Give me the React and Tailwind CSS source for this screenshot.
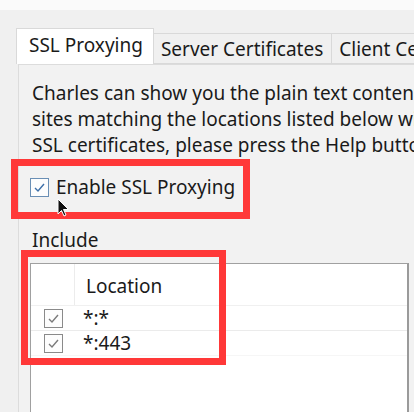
import React from 'react';

const font = { fontFamily: '"Noto Sans", "Open Sans", sans-serif' };

function Check({ blue }) {
  const border = blue ? 'border-[#6a8fb5]' : 'border-[#8a8a8a]';
  const stroke = blue ? '#3d6fa8' : '#7a7a7a';
  return (
    <span className={`flex items-center justify-center w-[19px] h-[19px] border ${border} bg-[#fdfdfd] shrink-0`}>
      <svg width="13" height="13" viewBox="0 0 13 13" fill="none">
        <path d="M2 7 L5 10 L11 3" stroke={stroke} strokeWidth="1.4" />
      </svg>
    </span>
  );
}

function Tab({ label, active }) {
  if (active) {
    return (
      <div className="h-[38px] pl-[12px] pr-[10px] pb-[4px] bg-white border border-b-0 border-[#d9d9d9] flex items-center text-[19px] text-[#1a1a1a] whitespace-nowrap shrink-0 relative z-10 -mb-[2px]">
        {label}
      </div>
    );
  }
  return (
    <div className="h-[31px] pl-[7px] pr-[8px] pt-[2px] bg-[#f0f0f0] border border-l-0 border-[#d9d9d9] flex items-center text-[19px] text-[#1a1a1a] whitespace-nowrap shrink-0">
      {label}
    </div>
  );
}

export default function App() {
  return (
    <div className="w-[414px] h-[412px] bg-[#f0f0f0] relative overflow-hidden" style={font}>
      <div className="h-[10px] bg-[#fafafa]" />
      <div className="flex items-end pl-[16px] pt-[18px] overflow-hidden">
        <Tab label="SSL Proxying" active />
        <Tab label="Server Certificates" />
        <Tab label="Client Certificates" />
      </div>
      <div className="ml-[18px] border-l border-t border-[#dcdcdc] bg-[#f2f2f2] h-[360px] pl-[13px] pt-[15px]">
        <div className="text-[19px] leading-[26px] text-[#1a1a1a] whitespace-nowrap">
          <div>Charles can show you the plain text contents of SSL requests and responses for</div>
          <div>sites matching the locations listed below without decrypting other traffic</div>
          <div>SSL certificates, please press the Help button.</div>
        </div>
        <div className="flex items-center gap-[7px] mt-[19px] -ml-[2px] h-[20px] text-[19px] text-[#1a1a1a]">
          <Check blue />
          <span>Enable SSL Proxying</span>
        </div>
        <div className="mt-[30px] text-[19px] leading-[26px] text-[#1a1a1a]">Include</div>
        <div className="mt-[10px] -ml-[2px] mr-[5px] h-[160px] border border-[#a0a0a0] border-r-2 border-r-[#9a9a9a] bg-white">
          <div className="flex h-[42px] border-b border-[#f0f0f0]">
            <div className="w-[44px] border-r border-[#ececec]" />
            <div className="flex items-center pl-[11px] pt-[4px] text-[19px] text-[#1a1a1a]">Location</div>
          </div>
          <div className="flex h-[25px] border-b border-[#ebebeb] items-center">
            <div className="w-[44px] flex justify-center"><Check /></div>
            <div className="pl-[8px] text-[19px] text-[#1a1a1a]">*:*</div>
          </div>
          <div className="flex h-[25px] border-b border-[#f6f6f6] items-center">
            <div className="w-[44px] flex justify-center"><Check /></div>
            <div className="pl-[8px] text-[19px] text-[#1a1a1a]">*:443</div>
          </div>
        </div>
      </div>

      <div className="absolute left-[11px] top-[159px] w-[239px] h-[60px] border-[7px] border-[#ff3838]" />
      <div className="absolute left-[21px] top-[250px] w-[205px] h-[115px] border-[7px] border-[#ff3838]" />

      <svg className="absolute left-[57px] top-[198px]" width="13" height="20" viewBox="0 0 13 20">
        <path d="M1 1 L1 16 L4.5 12.5 L7 18 L9 17 L6.5 11.5 L11.5 11.5 Z" fill="#111" stroke="#fff" strokeWidth="1" />
      </svg>
    </div>
  );
}
